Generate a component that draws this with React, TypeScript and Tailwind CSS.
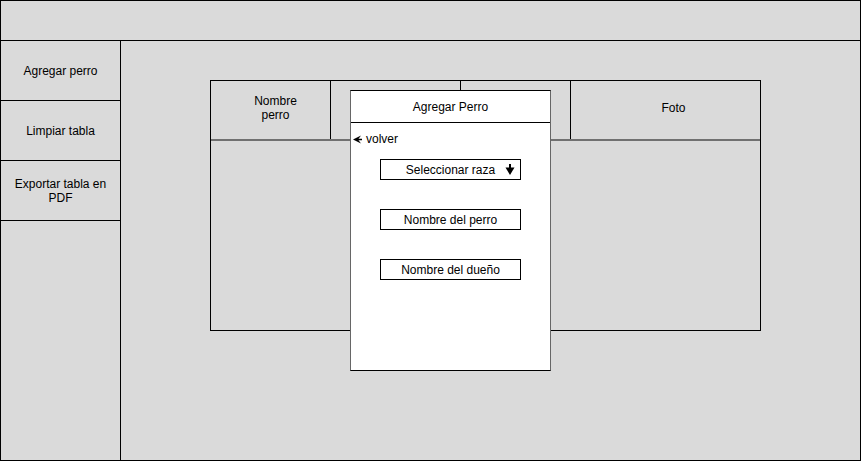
import React from 'react';

const SideButton: React.FC<{ children: React.ReactNode }> = ({ children }) => (
  <div className="h-[60px] border-b border-black flex items-center justify-center text-center px-2 leading-[14px]">
    {children}
  </div>
);

const Field: React.FC<{ label: string; dropdown?: boolean }> = ({ label, dropdown }) => (
  <div className="relative w-[141px] h-[21px] border border-black flex items-center justify-center">
    <span>{label}</span>
    {dropdown && (
      <svg className="absolute right-[5px] top-[4px]" width="10" height="12" viewBox="0 0 10 12">
        <line x1="5" y1="0" x2="5" y2="6" stroke="black" strokeWidth="2" />
        <polygon points="0.5,3.5 9.5,3.5 5,11" fill="black" />
      </svg>
    )}
  </div>
);

export default function App() {
  return (
    <div
      className="w-[861px] h-[461px] border border-black bg-[#dadada] flex flex-col text-[12px] text-black"
      style={{ fontFamily: '"Liberation Sans", Arial, sans-serif' }}
    >
      {/* top bar */}
      <div className="h-10 border-b border-black shrink-0" />

      <div className="flex flex-1 min-h-0">
        {/* sidebar */}
        <div className="w-[120px] border-r border-black shrink-0">
          <SideButton>Agregar perro</SideButton>
          <SideButton>Limpiar tabla</SideButton>
          <SideButton>
            Exportar tabla en
            <br />
            PDF
          </SideButton>
        </div>

        {/* main area */}
        <div className="flex-1 pl-[89px] pt-[39px]">
          <div className="relative w-[551px] h-[251px] border border-black">
            <div className="flex h-[60px] border-b-2 border-[#707070]">
              <div className="w-[120px] border-r border-black flex items-center justify-center text-center leading-[14px] pb-1 pl-[10px]">
                Nombre
                <br />
                perro
              </div>
              <div className="w-[130px] border-r border-black" />
              <div className="w-[110px] border-r border-black" />
              <div className="flex-1 flex items-center justify-center pb-1 pl-[16px]">Foto</div>
            </div>

            {/* modal */}
            <div className="absolute left-[139px] top-[9px] w-[201px] h-[281px] bg-white border border-black border-l-[#666] border-r-[#666] flex flex-col">
              <div className="h-[32px] border-b border-black flex items-center justify-center shrink-0">
                Agregar Perro
              </div>
              <div className="flex items-center gap-[4px] pl-[2px] pt-[9px] leading-[14px]">
                <svg width="9" height="9" viewBox="0 0 9 9">
                  <polygon points="0,4.5 8,0.5 5,4.5 8,8.5" fill="black" />
                  <line x1="4" y1="4.5" x2="9" y2="4.5" stroke="black" strokeWidth="1.5" />
                </svg>
                <span>volver</span>
              </div>
              <div className="flex flex-col gap-[29px] pl-[29px] pt-[13px]">
                <Field label="Seleccionar raza" dropdown />
                <Field label="Nombre del perro" />
                <Field label="Nombre del dueño" />
              </div>
            </div>
          </div>
        </div>
      </div>
    </div>
  );
}
